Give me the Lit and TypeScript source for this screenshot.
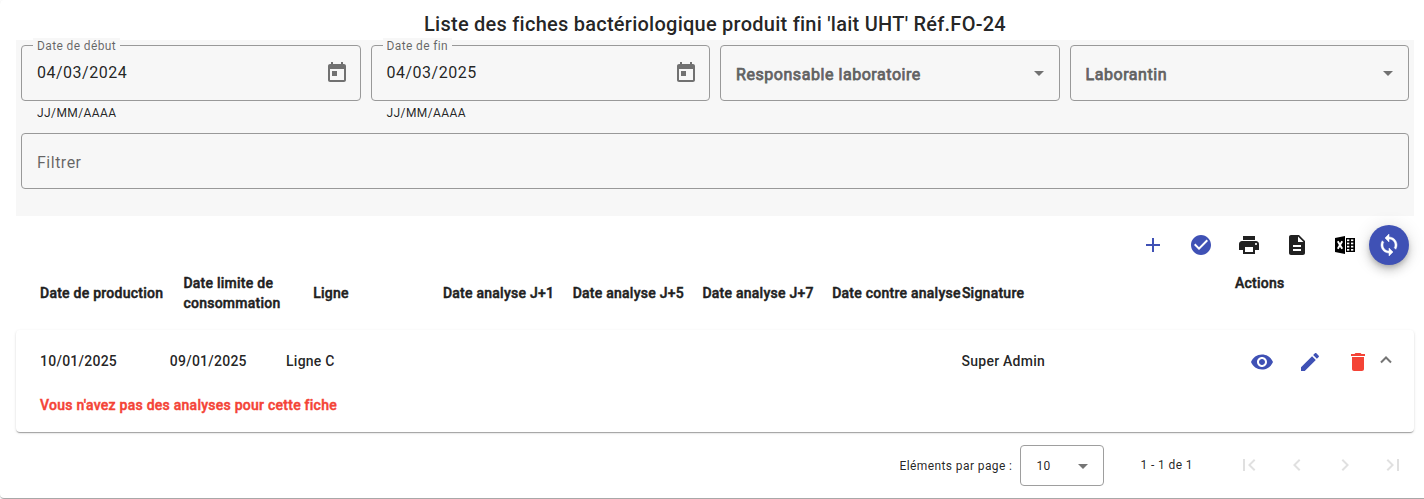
import { LitElement, html, css, svg } from "lit";
import { customElement, property } from "lit/decorators.js";

const ICONS: Record<string, string> = {
  today: "M19 3h-1V1h-2v2H8V1H6v2H5c-1.11 0-1.99.9-1.99 2L3 19c0 1.1.89 2 2 2h14c1.1 0 2-.9 2-2V5c0-1.1-.9-2-2-2zm0 16H5V8h14v11zM7 10h5v5H7z",
  arrowDown: "M7 10l5 5 5-5z",
  add: "M19 13h-6v6h-2v-6H5v-2h6V5h2v6h6v2z",
  checkCircle: "M12 2C6.48 2 2 6.48 2 12s4.48 10 10 10 10-4.48 10-10S17.52 2 12 2zm-2 15l-5-5 1.41-1.41L10 14.17l7.59-7.59L19 8l-9 9z",
  print: "M19 8H5c-1.66 0-3 1.34-3 3v6h4v4h12v-4h4v-6c0-1.66-1.34-3-3-3zm-3 11H8v-5h8v5zm3-7c-.55 0-1-.45-1-1s.45-1 1-1 1 .45 1 1-.45 1-1 1zm-1-9H6v4h12V3z",
  description: "M14 2H6c-1.1 0-1.99.9-1.99 2L4 20c0 1.1.89 2 1.99 2H18c1.1 0 2-.9 2-2V8l-6-6zm2 16H8v-2h8v2zm0-4H8v-2h8v2zm-3-5V3.500L18.500 9H13z",
  sync: "M12 4V1L8 5l4 4V6c3.310 0 6 2.690 6 6 0 1.010-.250 1.970-.700 2.800l1.460 1.460C19.540 15.030 20 13.570 20 12c0-4.420-3.580-8-8-8zm0 14c-3.310 0-6-2.690-6-6 0-1.010.250-1.970.700-2.800L5.240 7.740C4.460 8.970 4 10.430 4 12c0 4.420 3.580 8 8 8v3l4-4-4-4v3z",
  visibility: "M12 4.5C7 4.500 2.730 7.610 1 12c1.730 4.390 6 7.500 11 7.500s9.270-3.110 11-7.500c-1.730-4.390-6-7.500-11-7.500zM12 17c-2.760 0-5-2.240-5-5s2.240-5 5-5 5 2.240 5 5-2.240 5-5 5zm0-8c-1.660 0-3 1.340-3 3s1.340 3 3 3 3-1.340 3-3-1.340-3-3-3z",
  edit: "M3 17.250V21h3.750L17.810 9.940l-3.750-3.750L3 17.250zM20.710 7.040c.390-.390.390-1.020 0-1.410l-2.340-2.340c-.390-.390-1.020-.390-1.410 0l-1.830 1.830 3.750 3.750 1.830-1.830z",
  remove: "M6 19c0 1.100.9 2 2 2h8c1.100 0 2-.9 2-2V7H6v12zM19 4h-3.500l-1-1h-5l-1 1H5v2h14V4z",
  first: "M18.410 16.590L13.820 12l4.590-4.590L17 6l-6 6 6 6zM6 6h2v12H6z",
  previous: "M15.410 7.410L14 6l-6 6 6 6 1.410-1.410L10.830 12z",
  next: "M10 6L8.590 7.410 13.170 12l-4.580 4.590L10 18l6-6z",
  last: "M5.590 7.410L10.180 12l-4.590 4.590L7 18l6-6-6-6zM16 6h2v12h-2z",
};

@customElement("app-icon")
class AppIcon extends LitElement {
  @property() name = "";
  static styles = css`
    :host { display: block; flex: none; width: 24px; height: 24px; }
    svg { display: block; width: 100%; height: 100%; fill: currentColor; }
    .mark { fill: none; stroke: #fff; stroke-width: 1.9; }
    .sync { stroke: currentColor; stroke-width: .5; }
    .cell { fill: #fff; }
  `;
  render() {
    if (this.name === "excel") {
      return html`<svg viewBox="0 0 24 24">
        ${svg`<path d="M2 5L12 3V21L2 19Z" /><path class="mark" d="M4.800 8.200L9.200 15.800M9.200 8.200L4.800 15.800" />
        <path d="M13 5H22V19H13Z" />`}
        ${[6.4, 9.6, 12.8, 16].map((y) => [14, 18].map((x) => svg`<rect class="cell" x=${x} y=${y} width="2.300" height="1.700" />`))}
      </svg>`;
    }
    return html`<svg viewBox="0 0 24 24"><path class=${this.name} d=${ICONS[this.name] ?? ""} /></svg>`;
  }
}

@customElement("outlined-field")
class OutlinedField extends LitElement {
  @property() label = "";
  @property() value = "";
  @property() hint = "";
  @property() kind = "text";
  static styles = css`
    :host { display: block; }
    .box { box-sizing: border-box; height: 56px; margin: 0; padding: 0 11px 0 15px; border: 1px solid #999; border-radius: 4px;
      display: flex; align-items: center; justify-content: space-between; position: relative; color: rgba(0,0,0,.87);
      font-size: 16px; letter-spacing: .5px; line-height: 24px; }
    .float { position: absolute; top: -8px; left: 11px; padding: 0 4px; background: #f7f7f7; font-size: 12px; line-height: 16px;
      letter-spacing: .375px; color: rgba(0,0,0,.6); }
    .value { margin-top: -1px; }
    .select { color: #626262; letter-spacing: .55px; -webkit-text-stroke: .75px #626262; margin-top: 3px; }
    .text { color: rgba(0,0,0,.6); margin-top: 3px; }
    .icon { color: rgba(0,0,0,.54); margin-top: -1px; }
    .arrow { margin-right: -3px; }
    .hint { padding: 2px 16px 0; font-size: 12px; line-height: 20px; letter-spacing: .4px; color: rgba(0,0,0,.87); }
  `;
  render() {
    const date = this.kind === "date";
    return html`<div class="box">
        ${date ? html`<span class="float">${this.label}</span>` : null}
        <span class=${date ? "value" : this.kind}>${date ? this.value : this.label}</span>
        ${date ? html`<app-icon class="icon" name="today"></app-icon>` : null}
        ${this.kind === "select" ? html`<app-icon class="icon arrow" name="arrowDown"></app-icon>` : null}
      </div>
      ${this.hint ? html`<div class="hint">${this.hint}</div>` : null}`;
  }
}

@customElement("app-root")
class AppRoot extends LitElement {
  static styles = css`
    :host { display: block; height: 499px; overflow: hidden; background: #fff; font-family: Roboto, "Liberation Sans", sans-serif; color: rgba(0,0,0,.87); }
    .page { box-sizing: border-box; width: 1430px; height: 498px; padding: 8px 16px 0; background: #fff; border-radius: 4px;
      box-shadow: 0 2px 1px -1px rgba(0,0,0,.2), 0 1px 1px rgba(0,0,0,.14), 0 1px 3px rgba(0,0,0,.12); }
    .title { height: 32px; text-align: center; font-size: 20px; font-weight: 500; line-height: 32px; letter-spacing: .25px; }
    .filters { box-sizing: border-box; height: 176px; padding: 5px; background: #f7f7f7; }
    .fields { display: grid; grid-template-columns: repeat(4, 1fr); gap: 10px; height: 88px; }
    .tools { display: flex; justify-content: flex-end; align-items: center; gap: 24px; height: 58px; padding-right: 5px; }
    .blue { color: #3f51b5; }
    .red { color: #f44336; }
    .black { color: #000; }
    .fab { display: flex; align-items: center; justify-content: center; width: 40px; height: 40px; margin-left: -12px; border-radius: 50%;
      background: #3f51b5; color: #fff; box-shadow: 0 3px 5px -1px rgba(0,0,0,.2), 0 6px 10px rgba(0,0,0,.14), 0 1px 18px rgba(0,0,0,.12); }
    .head { display: grid; grid-template-columns: 143.400px repeat(6, 129.750px) 273px 1fr; align-items: center; height: 38px; padding: 0 0 20px 24px;
      margin-top: -1px; margin-bottom: -1px; font-size: 14px; font-weight: 500; letter-spacing: .25px; line-height: 20px; white-space: nowrap; 
      color: #212121; -webkit-text-stroke: .45px #212121; }
    .two { white-space: normal; max-width: 110px; }
    .actions-title { align-self: start; }
    .card { box-sizing: border-box; height: 102px; padding: 18px 16px 0 24px; border-radius: 4px; background: #fff; 
      box-shadow: 0 2px 1px -1px rgba(0,0,0,.2), 0 1px 1px rgba(0,0,0,.14), 0 1px 3px rgba(0,0,0,.12); }
    .row { display: grid; grid-template-columns: 129.750px 116.250px 675.500px 1fr auto; align-items: center; height: 26px; font-size: 14px; font-weight: 500; letter-spacing: .25px; }
    .acts { display: flex; gap: 24px; padding-top: 2px; }
    .chev { width: 24px; height: 24px; margin: -2px 0 0 -20px; color: rgba(0,0,0,.54); }
    .warn { margin-top: 21px; font-size: 14px; font-weight: 500; letter-spacing: .25px; line-height: 20px; color: #f44336; -webkit-text-stroke: .45px #f44336; }
    .pager { display: flex; align-items: center; justify-content: flex-end; height: 66px; padding-right: 9px; font-size: 12px; letter-spacing: .4px; }
    .per { padding-top: 2px; }
    .size { box-sizing: border-box; display: flex; align-items: center; justify-content: space-between; width: 84px; height: 41px; margin: 0 36px 0 8px;
      padding: 1px 8px 0 15px; border: 1px solid #9e9e9e; border-radius: 4px; }
    .size app-icon { color: rgba(0,0,0,.54); }
    .nav { display: flex; gap: 24px; margin-left: 44px; color: rgba(0,0,0,.12); }
  `;
  private dates = ["Date analyse J+1", "Date analyse J+5", "Date analyse J+7", "Date contre analyse"];
  render() {
    return html`<main class="page">
      <div class="title">Liste des fiches bactériologique produit fini 'lait UHT' Réf.FO-24</div>
      <section class="filters">
        <div class="fields">
          <outlined-field kind="date" label="Date de début" value="04/03/2024" hint="JJ/MM/AAAA"></outlined-field>
          <outlined-field kind="date" label="Date de fin" value="04/03/2025" hint="JJ/MM/AAAA"></outlined-field>
          <outlined-field kind="select" label="Responsable laboratoire"></outlined-field>
          <outlined-field kind="select" label="Laborantin"></outlined-field>
        </div>
        <outlined-field kind="text" label="Filtrer"></outlined-field>
      </section>
      <div class="tools">
        <app-icon class="blue" name="add"></app-icon>
        <app-icon class="blue" name="checkCircle"></app-icon>
        <app-icon name="print"></app-icon>
        <app-icon name="description"></app-icon>
        <app-icon class="black" name="excel"></app-icon>
        <div class="fab"><app-icon name="sync"></app-icon></div>
      </div>
      <div class="head">
        <span>Date de production</span><span class="two">Date limite de consommation</span><span>Ligne</span>
        ${this.dates.map((d) => html`<span>${d}</span>`)}
        <span>Signature</span><span class="actions-title">Actions</span>
      </div>
      <section class="card">
        <div class="row">
          <span>10/01/2025</span><span>09/01/2025</span><span>Ligne C</span><span>Super Admin</span>
          <div class="acts">
            <app-icon class="blue" name="visibility"></app-icon>
            <app-icon class="blue" name="edit"></app-icon>
            <app-icon class="red" name="remove"></app-icon>
            <svg class="chev" viewBox="0 0 24 24"><path d="M7 14.500l5-5 5 5" fill="none" stroke="currentColor" stroke-width="2" /></svg>
          </div>
        </div>
        <div class="warn">Vous n'avez pas des analyses pour cette fiche</div>
      </section>
      <div class="pager">
        <span class="per">Eléments par page :</span>
        <div class="size"><span>10</span><app-icon name="arrowDown"></app-icon></div>
        <span>1 - 1 de 1</span>
        <div class="nav">
          ${["first", "previous", "next", "last"].map((n) => html`<app-icon name=${n}></app-icon>`)}
        </div>
      </div>
    </main>`;
  }
}
